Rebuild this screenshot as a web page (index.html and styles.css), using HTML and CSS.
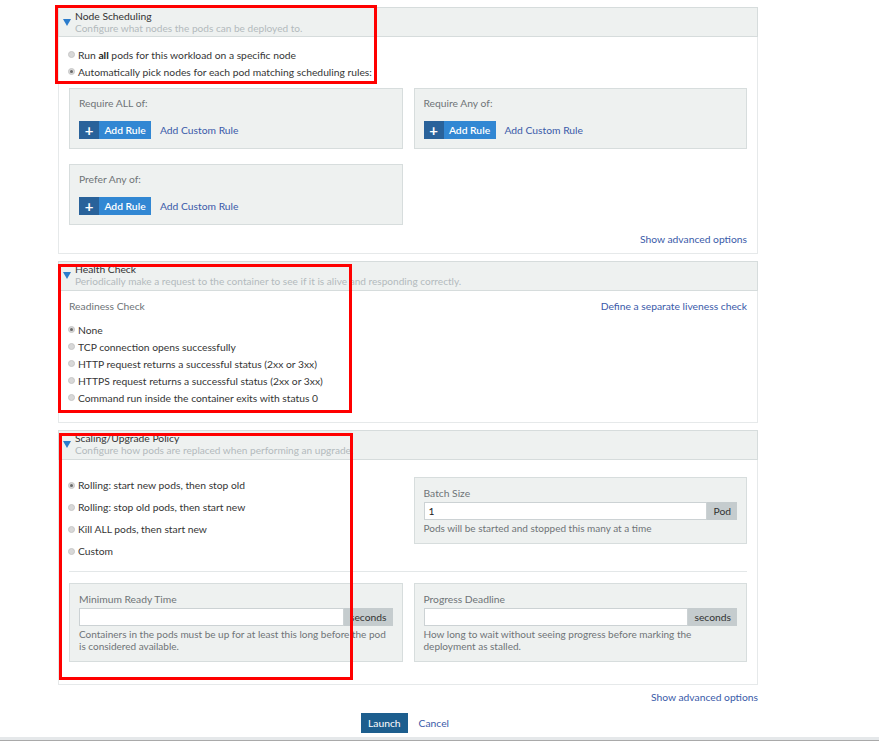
FILE: index.html
```html
<!DOCTYPE html>
<html>
<head>
<meta charset="utf-8">
<link rel="stylesheet" href="styles.css">
</head>
<body>
<div class="page">
  <section class="panel">
    <div class="panel-head">
      <span class="caret"></span>
      <div class="head-text">
        <div class="title">Node Scheduling</div>
        <div class="sub">Configure what nodes the pods can be deployed to.</div>
      </div>
    </div>
    <div class="panel-body body-node">
      <div class="radio-row"><span class="radio"></span><span>Run <b>all</b> pods for this workload on a specific node</span></div>
      <div class="radio-row"><span class="radio on"></span><span>Automatically pick nodes for each pod matching scheduling rules:</span></div>
      <div class="grid rules">
        <div class="box rule-box">
          <div class="box-label">Require ALL of:</div>
          <div class="btn-row">
            <span class="add-btn"><span class="plus">+</span><span class="add-text">Add Rule</span></span>
            <a class="link">Add Custom Rule</a>
          </div>
        </div>
        <div class="box rule-box">
          <div class="box-label">Require Any of:</div>
          <div class="btn-row">
            <span class="add-btn"><span class="plus">+</span><span class="add-text">Add Rule</span></span>
            <a class="link">Add Custom Rule</a>
          </div>
        </div>
        <div class="box rule-box">
          <div class="box-label">Prefer Any of:</div>
          <div class="btn-row">
            <span class="add-btn"><span class="plus">+</span><span class="add-text">Add Rule</span></span>
            <a class="link">Add Custom Rule</a>
          </div>
        </div>
      </div>
      <div class="adv"><a class="link">Show advanced options</a></div>
    </div>
  </section>

  <section class="panel">
    <div class="panel-head head-health">
      <span class="caret"></span>
      <div class="head-text">
        <div class="title">Health Check</div>
        <div class="sub">Periodically make a request to the container to see if it is alive and responding correctly.</div>
      </div>
    </div>
    <div class="panel-body body-health">
      <div class="readiness">
        <span class="box-label">Readiness Check</span>
        <a class="link">Define a separate liveness check</a>
      </div>
      <div class="radio-list">
        <div class="radio-row"><span class="radio on"></span><span>None</span></div>
        <div class="radio-row"><span class="radio"></span><span>TCP connection opens successfully</span></div>
        <div class="radio-row"><span class="radio"></span><span>HTTP request returns a successful status (2xx or 3xx)</span></div>
        <div class="radio-row"><span class="radio"></span><span>HTTPS request returns a successful status (2xx or 3xx)</span></div>
        <div class="radio-row"><span class="radio"></span><span>Command run inside the container exits with status 0</span></div>
      </div>
    </div>
  </section>

  <section class="panel">
    <div class="panel-head head-scale">
      <span class="caret"></span>
      <div class="head-text">
        <div class="title">Scaling/Upgrade Policy</div>
        <div class="sub">Configure how pods are replaced when performing an upgrade.</div>
      </div>
    </div>
    <div class="panel-body body-scale">
      <div class="grid top-grid">
        <div class="strategy">
          <div class="radio-row tall"><span class="radio on"></span><span>Rolling: start new pods, then stop old</span></div>
          <div class="radio-row tall"><span class="radio"></span><span>Rolling: stop old pods, then start new</span></div>
          <div class="radio-row tall"><span class="radio"></span><span>Kill ALL pods, then start new</span></div>
          <div class="radio-row tall"><span class="radio"></span><span>Custom</span></div>
        </div>
        <div class="box field-box batch">
          <div class="box-label">Batch Size</div>
          <div class="input-group">
            <span class="input">1</span>
            <span class="addon">Pod</span>
          </div>
          <div class="help">Pods will be started and stopped this many at a time</div>
        </div>
      </div>
      <div class="divider"></div>
      <div class="grid">
        <div class="box field-box">
          <div class="box-label">Minimum Ready Time</div>
          <div class="input-group">
            <span class="input"></span>
            <span class="addon">seconds</span>
          </div>
          <div class="help">Containers in the pods must be up for at least this long before the pod is considered available.</div>
        </div>
        <div class="box field-box">
          <div class="box-label">Progress Deadline</div>
          <div class="input-group">
            <span class="input"></span>
            <span class="addon">seconds</span>
          </div>
          <div class="help">How long to wait without seeing progress before marking the deployment as stalled.</div>
        </div>
      </div>
    </div>
  </section>

  <div class="adv outer-adv"><a class="link">Show advanced options</a></div>
  <div class="actions">
    <span class="launch">Launch</span>
    <a class="link">Cancel</a>
  </div>
</div>
<div class="bottom-bar"></div>

<div class="annot annot-1"></div>
<div class="annot annot-2"></div>
<div class="annot annot-3"></div>
</body>
</html>
```

FILE: styles.css
```css
html, body {
  margin: 0;
  padding: 0;
  background: #ffffff;
}
body {
  font-family: "Lato", "Open Sans", sans-serif;
  font-size: 10.3px;
  line-height: 12px;
  color: #353535;
  position: relative;
  width: 879px;
  height: 741px;
  overflow: hidden;
}
.page {
  width: 700px;
  margin-left: 58px;
  padding-top: 7px;
  display: flex;
  flex-direction: column;
  gap: 7px;
}
.panel {
  display: flex;
  flex-direction: column;
}
.panel-head {
  display: flex;
  align-items: flex-start;
  background: #eef1f0;
  border: 1px solid #d6dcdc;
  padding: 2px 4px 2px 4px;
  gap: 4px;
}
.head-health, .head-scale {
  padding-top: 1px;
  padding-bottom: 3px;
}
.caret {
  width: 0;
  height: 0;
  border-left: 4.5px solid transparent;
  border-right: 4.5px solid transparent;
  border-top: 7px solid #2b7ccc;
  margin-top: 9px;
}
.head-text .title {
  color: #333;
}
.head-text .sub {
  color: #b3babd;
  font-size: 10.1px;
}
.panel-body {
  border: 1px solid #e6e9ea;
  border-top: none;
  padding: 9px 10px 8px 10px;
  display: flex;
  flex-direction: column;
}
.radio-row {
  height: 17px;
  display: flex;
  align-items: center;
}
.radio-row.tall {
  height: 22px;
}
.radio {
  width: 5px;
  height: 5px;
  border-radius: 50%;
  background: #d8d8d8;
  border: 1px solid #c8c8c8;
  margin-left: -1px;
  margin-right: 3px;
  position: relative;
  flex: none;
}
.radio.on::after {
  content: "";
  position: absolute;
  left: 1px;
  top: 1px;
  width: 3px;
  height: 3px;
  border-radius: 50%;
  background: #6a6a6a;
}
b {
  font-weight: 700;
  color: #222;
}
.grid {
  display: grid;
  grid-template-columns: 1fr 1fr;
  column-gap: 11px;
}
.rules {
  margin-top: 8px;
  row-gap: 15px;
}
.box {
  background: #eef1f0;
  border: 1px solid #d7dddd;
}
.rule-box {
  padding: 8px 9px 9px;
}
.box-label {
  color: #6e7477;
}
.btn-row {
  margin-top: 12px;
  display: flex;
  align-items: center;
  gap: 9px;
}
.add-btn {
  display: flex;
  height: 18px;
}
.plus {
  width: 20px;
  background: #29629a;
  color: #fff;
  font-weight: 700;
  font-size: 15px;
  line-height: 18px;
  text-align: center;
}
.add-text {
  width: 52px;
  background: #3187d3;
  color: #fff;
  line-height: 18px;
  text-align: center;
  font-weight: 600;
}
.link {
  color: #3a5aa9;
  cursor: pointer;
}
.adv {
  display: flex;
  justify-content: flex-end;
  margin-top: 8px;
}
.body-health {
  padding-bottom: 16px;
}
.readiness {
  display: flex;
  justify-content: space-between;
}
.radio-list {
  margin-top: 9px;
}
.body-scale {
  padding-top: 14px;
  padding-bottom: 22px;
}
.batch {
  margin-top: 3px;
  align-self: start;
}
.field-box {
  padding: 9px 9px 9px;
}
.input-group {
  display: flex;
  height: 18px;
  margin-top: 3px;
}
.input {
  flex: 1;
  background: #fff;
  border: 1px solid #ccd2d4;
  padding-left: 4px;
  line-height: 16px;
  color: #222;
}
.addon {
  background: #c5ccce;
  padding: 0 6px;
  line-height: 18px;
  color: #333;
}
.help {
  margin-top: 2px;
  color: #6e7477;
  font-size: 10px;
}
.divider {
  height: 1px;
  background: #e3e7e8;
  margin: 9px 0 11px;
}
.outer-adv {
  margin-top: -1px;
}
.actions {
  display: flex;
  justify-content: center;
  align-items: center;
  gap: 11px;
  margin-top: 3px;
  padding-right: 6px;
}
.launch {
  background: #1d5e8e;
  color: #fff;
  height: 20px;
  line-height: 20px;
  padding: 0 7px;
}
.bottom-bar {
  position: absolute;
  left: 0;
  right: 0;
  bottom: 0;
  height: 3px;
  background: #e5e8ea;
  border-bottom: 1px solid #a9a9a9;
}
.annot {
  position: absolute;
  border: 3px solid #ff0000;
  box-sizing: border-box;
}
.annot-1 { left: 55px; top: 5px; width: 322px; height: 79px; }
.annot-2 { left: 58px; top: 264px; width: 294px; height: 149px; }
.annot-3 { left: 59px; top: 433px; width: 294px; height: 247px; }
```
